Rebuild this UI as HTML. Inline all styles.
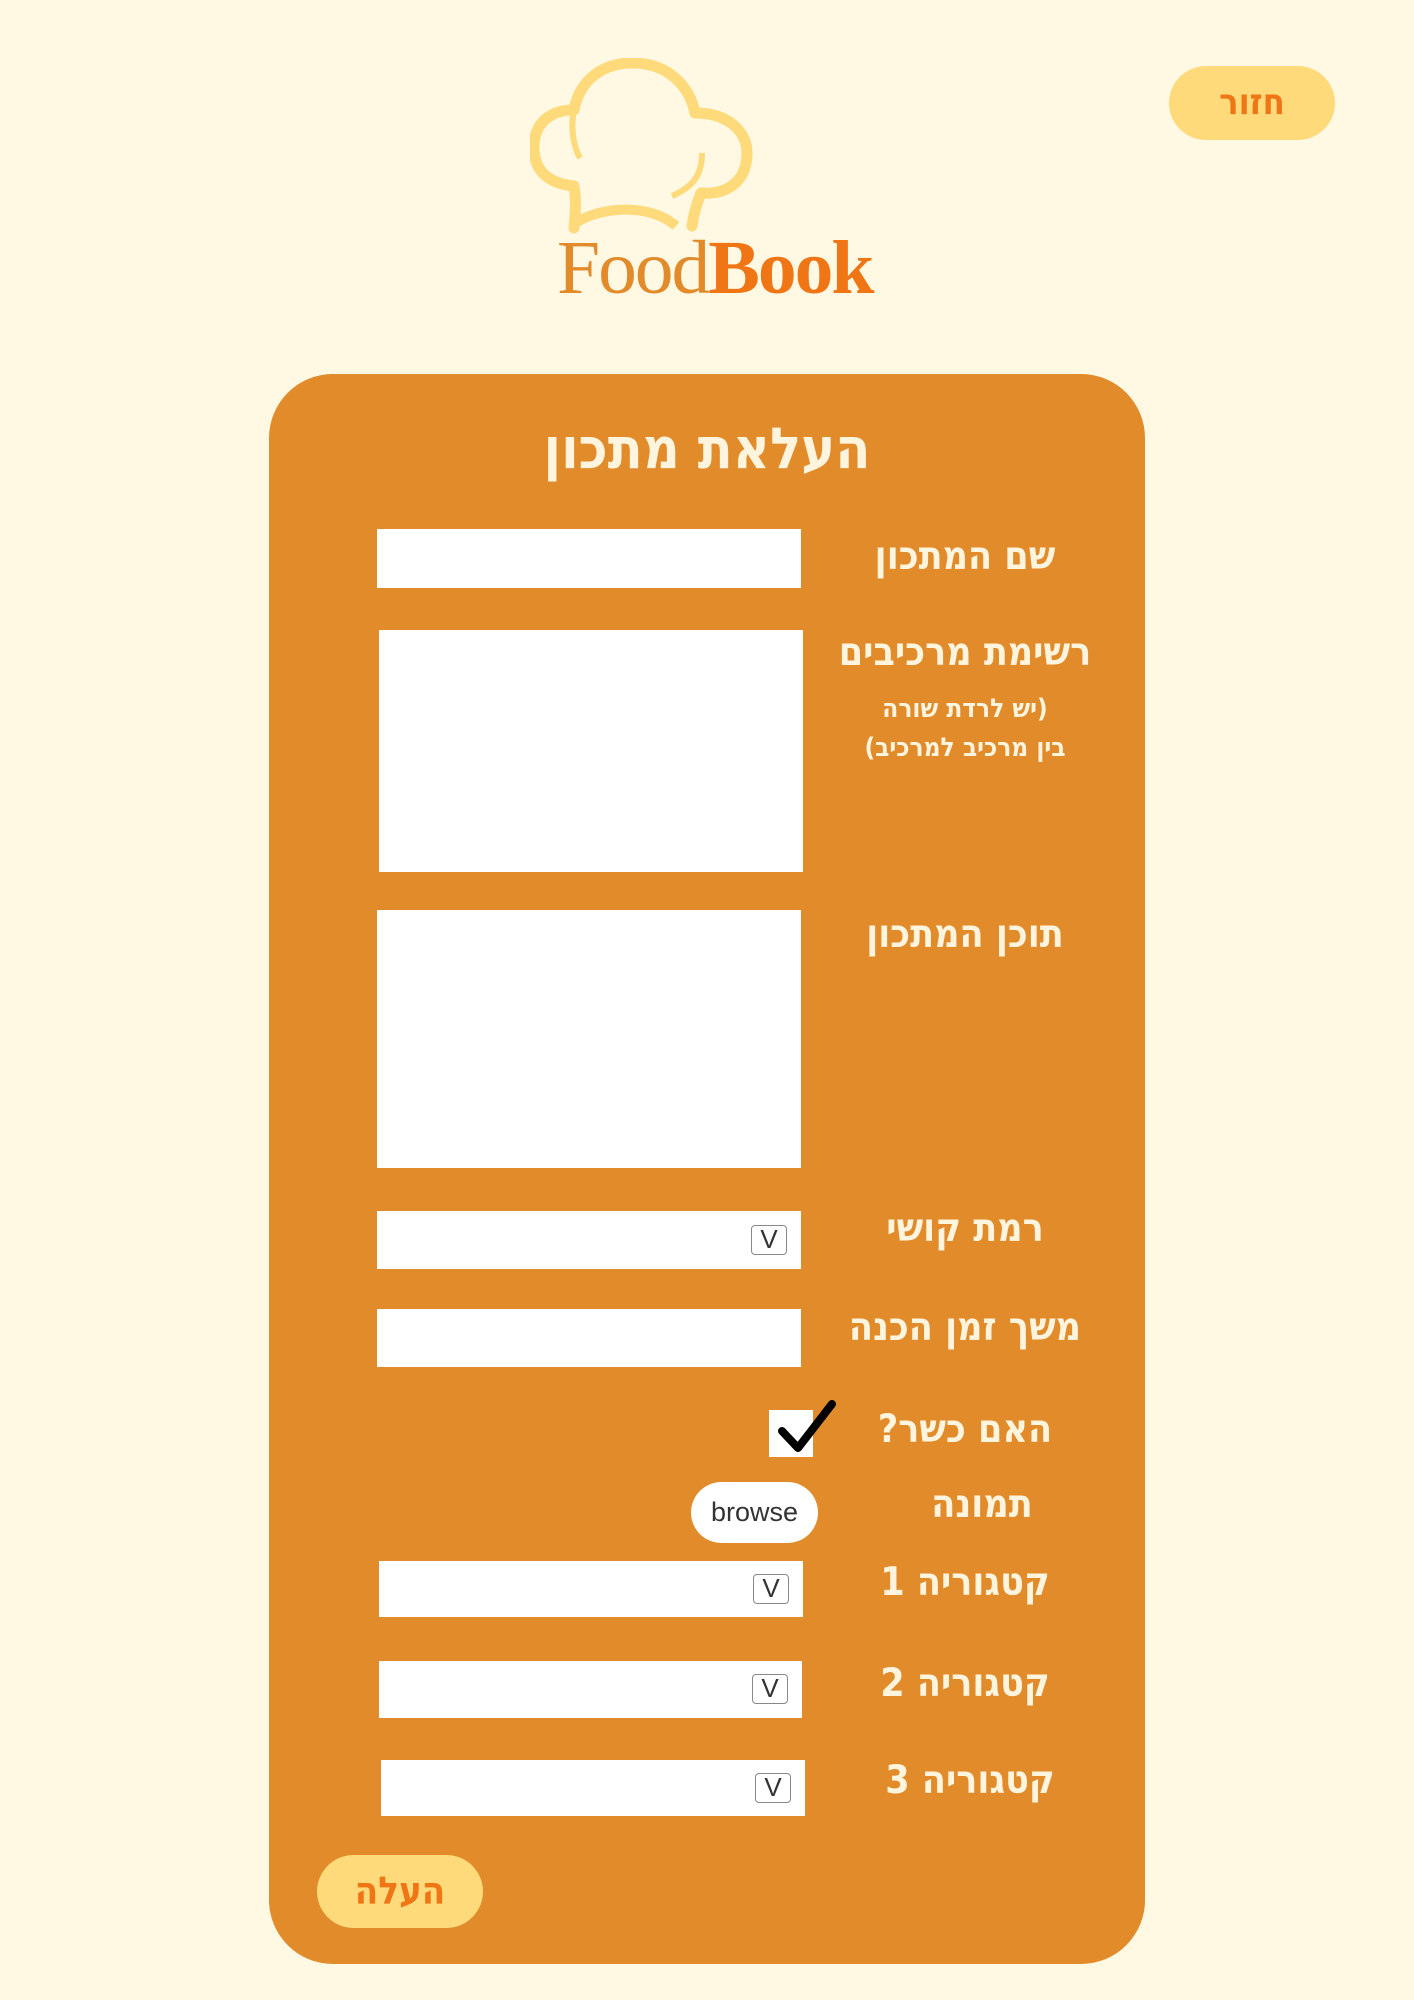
<!DOCTYPE html>
<html><head><meta charset="utf-8"><style>
*{margin:0;padding:0;box-sizing:border-box}
body{width:1414px;height:2000px;background:#fff8e3;position:relative;overflow:hidden;font-family:"DejaVu Sans Condensed","DejaVu Sans","Liberation Sans",sans-serif;}
.a{position:absolute}
.card{left:269px;top:374px;width:876px;height:1590px;background:#e28b2b;border-radius:64px}
.in{position:absolute;background:#fff}
.lb{position:absolute;color:#fff5de;font-weight:bold;font-size:39px;text-align:center;width:340px;left:795px;direction:rtl;line-height:1;white-space:nowrap}
.v{position:absolute;right:14px;top:14px;width:36px;height:30px;border:1.5px solid #888;border-radius:4px;font-family:"Liberation Sans",sans-serif;font-size:26px;line-height:27px;text-align:center;color:#333;background:#fff}
.btn{position:absolute;background:#ffda7a;color:#ef7515;font-weight:bold;text-align:center;direction:rtl}
</style></head><body>
<div class="btn" style="left:1169px;top:66px;width:166px;height:74px;border-radius:37px;font-size:36px;line-height:74px">חזור</div>
<svg class="a" style="left:530px;top:58px" width="224" height="180" viewBox="0 0 224 180">
<path d="M44 170 C46 150 46 140 44 128 C15 125 4 110 4 90 C4 65 20 52 44 52 C50 20 75 5 102 5 C140 5 160 30 165 55 C200 55 217 75 217 95 C217 125 195 137 171 135 C165 150 163 160 162 168" fill="none" stroke="#ffda7a" stroke-width="11" stroke-linecap="round" stroke-linejoin="round"/>
<path d="M44 166 C70 148 120 145 146 168" stroke="#ffda7a" stroke-width="10" fill="none"/>
<path d="M44 52 C40 70 44 90 50 100" stroke="#ffda7a" stroke-width="6" fill="none"/>
<path d="M172 95 C172 120 160 130 142 138" stroke="#ffda7a" stroke-width="6" fill="none"/>
</svg>
<div class="a" style="left:557px;top:226px;font-family:'Liberation Serif',serif;font-size:76px;line-height:84px;letter-spacing:-2px;transform:scaleX(1.02);transform-origin:left"><span style="color:#e28b2b">Food</span><span style="color:#ef7515;font-weight:bold">Book</span></div>
<div class="a card"></div>
<div class="a" style="left:269px;width:876px;top:416px;text-align:center;color:#fff5de;font-weight:bold;font-size:57px;direction:rtl">העלאת מתכון</div>
<div class="in" style="left:377px;top:529px;width:424px;height:59px"></div>
<div class="lb" style="top:537px">שם המתכון</div>
<div class="in" style="left:379px;top:630px;width:424px;height:242px"></div>
<div class="lb" style="top:633px">רשימת מרכיבים</div>
<div class="lb" style="top:696px;font-size:26px">(יש לרדת שורה</div>
<div class="lb" style="top:735px;font-size:26px">בין מרכיב למרכיב)</div>
<div class="in" style="left:377px;top:910px;width:424px;height:258px"></div>
<div class="lb" style="top:915px">תוכן המתכון</div>
<div class="in" style="left:377px;top:1211px;width:424px;height:58px"><div class="v">V</div></div>
<div class="lb" style="top:1209px">רמת קושי</div>
<div class="in" style="left:377px;top:1309px;width:424px;height:58px"></div>
<div class="lb" style="top:1308px">משך זמן הכנה</div>
<div class="in" style="left:769px;top:1410px;width:44px;height:47px"></div>
<svg class="a" style="left:770px;top:1396px" width="70" height="60" viewBox="0 0 70 60"><path d="M12 35 L28 52 L62 8" stroke="#000" stroke-width="8" fill="none" stroke-linecap="round" stroke-linejoin="round"/></svg>
<div class="lb" style="top:1410px">האם כשר?</div>
<div class="a" style="left:691px;top:1482px;width:127px;height:61px;background:#fff;border-radius:31px;font-family:'Liberation Sans',sans-serif;font-size:27px;line-height:61px;text-align:center;color:#333">browse</div>
<div class="lb" style="top:1485px;left:812px">תמונה</div>
<div class="in" style="left:379px;top:1561px;width:424px;height:56px"><div class="v" style="top:13px">V</div></div>
<div class="lb" style="top:1563px">קטגוריה 1</div>
<div class="in" style="left:379px;top:1661px;width:423px;height:57px"><div class="v" style="top:13px">V</div></div>
<div class="lb" style="top:1664px">קטגוריה 2</div>
<div class="in" style="left:381px;top:1760px;width:424px;height:56px"><div class="v" style="top:13px">V</div></div>
<div class="lb" style="top:1761px;left:800px">קטגוריה 3</div>
<div class="btn" style="left:317px;top:1855px;width:166px;height:73px;border-radius:37px;font-size:38px;line-height:73px">העלה</div>
</body></html>
